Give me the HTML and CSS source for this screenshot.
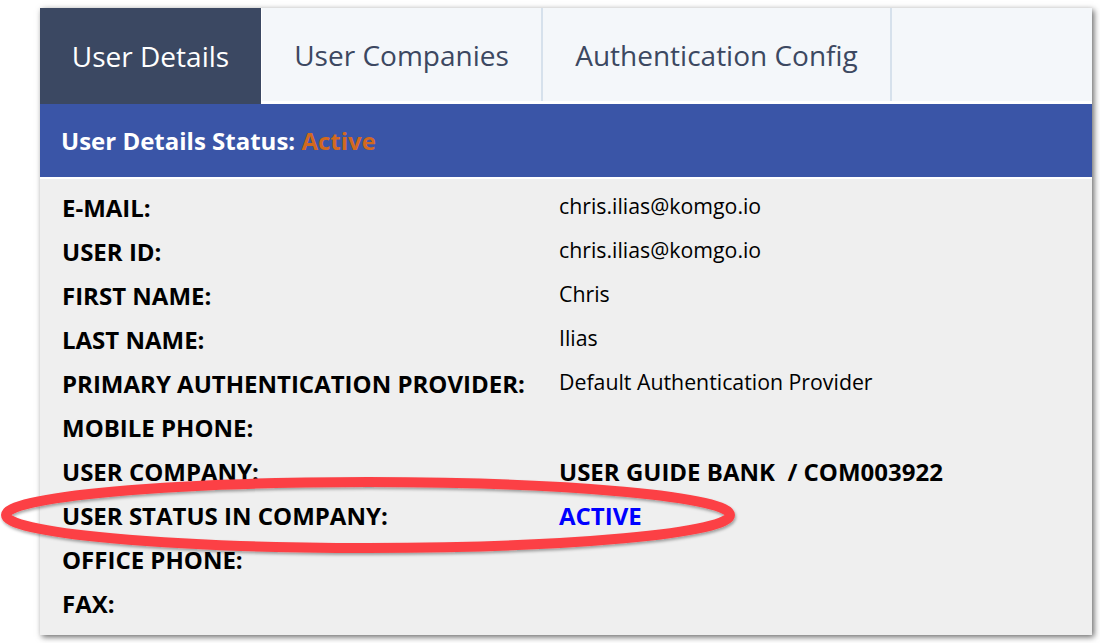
FILE: index.html
```html
<!DOCTYPE html>
<html>
<head>
<meta charset="utf-8">
<link rel="stylesheet" href="styles.css">
</head>
<body>
<div class="panel">
  <div class="tabs">
    <div class="tab active">User Details</div>
    <div class="tab t2">User Companies</div>
    <div class="tab t3">Authentication Config</div>
    <div class="tab rest"></div>
  </div>
  <div class="status">User Details Status: <span class="orange">Active</span></div>
  <div class="details">
    <div class="label">E-MAIL:</div><div class="value">chris.ilias@komgo.io</div>
    <div class="label">USER ID:</div><div class="value">chris.ilias@komgo.io</div>
    <div class="label">FIRST NAME:</div><div class="value">Chris</div>
    <div class="label">LAST NAME:</div><div class="value">Ilias</div>
    <div class="label">PRIMARY AUTHENTICATION PROVIDER:</div><div class="value">Default Authentication Provider</div>
    <div class="label">MOBILE PHONE:</div><div class="value"></div>
    <div class="label">USER COMPANY:</div><div class="value strong">USER GUIDE BANK&nbsp; / COM003922</div>
    <div class="label">USER STATUS IN COMPANY:</div><div class="value strong blue">ACTIVE</div>
    <div class="label">OFFICE PHONE:</div><div class="value"></div>
    <div class="label">FAX:</div><div class="value"></div>
  </div>
</div>
<svg class="circle" width="750" height="90" viewBox="0 0 750 90">
  <defs>
    <filter id="sh" x="-5%" y="-30%" width="110%" height="160%">
      <feDropShadow dx="1" dy="2" stdDeviation="1.5" flood-color="#000" flood-opacity="0.35"/>
    </filter>
  </defs>
  <ellipse cx="368" cy="45" rx="362" ry="33" fill="none" stroke="#fc4145" stroke-width="10" filter="url(#sh)"/>
</svg>
</body>
</html>
```
FILE: styles.css
```css
html, body {
  margin: 0;
  padding: 0;
  background: #ffffff;
}
body {
  font-family: "Open Sans", "Noto Sans", sans-serif;
  width: 1100px;
  height: 643px;
  overflow: hidden;
  position: relative;
}
.panel {
  margin: 8px 0 0 40px;
  width: 1052px;
  height: 627px;
  background: #efefef;
  box-shadow: 2px 2px 6px rgba(0, 0, 0, 0.6);
  display: flex;
  flex-direction: column;
}
.tabs {
  display: flex;
  height: 96px;
  background: #ffffff;
}
.tab {
  display: flex;
  align-items: center;
  justify-content: center;
  font-size: 28px;
  color: #3c4861;
  background: #f4f7fa;
  border-right: 2px solid #d6e1ec;
  box-sizing: border-box;
  height: 93px;
}
.tab.active {
  background: #3b4862;
  color: #ffffff;
  width: 222px;
  height: 96px;
  border-right: 1px solid #ffffff;
}
.tab.t2 { width: 281px; }
.tab.t3 { width: 349px; }
.tab.rest { flex: 1; border-right: none; }
.status {
  height: 73px;
  background: #3a55a7;
  color: #ffffff;
  font-weight: 700;
  font-size: 24px;
  display: flex;
  align-items: center;
  padding-left: 21px;
  white-space: pre;
  border-bottom: 2px solid #ffffff;
}
.orange { color: #d2691e; }
.details {
  display: grid;
  grid-template-columns: 497px 1fr;
  grid-auto-rows: 44px;
  align-items: center;
  padding: 6px 0 0 22px;
}
.label {
  font-weight: 700;
  font-size: 24px;
  color: #000000;
}
.value {
  font-size: 21.3px;
  color: #000000;
  margin-top: -4px;
}
.value.strong {
  font-weight: 700;
  font-size: 24px;
  margin-top: 0;
}
.blue { color: #0000ff; }
.circle {
  position: absolute;
  left: 0;
  top: 470px;
}
```
